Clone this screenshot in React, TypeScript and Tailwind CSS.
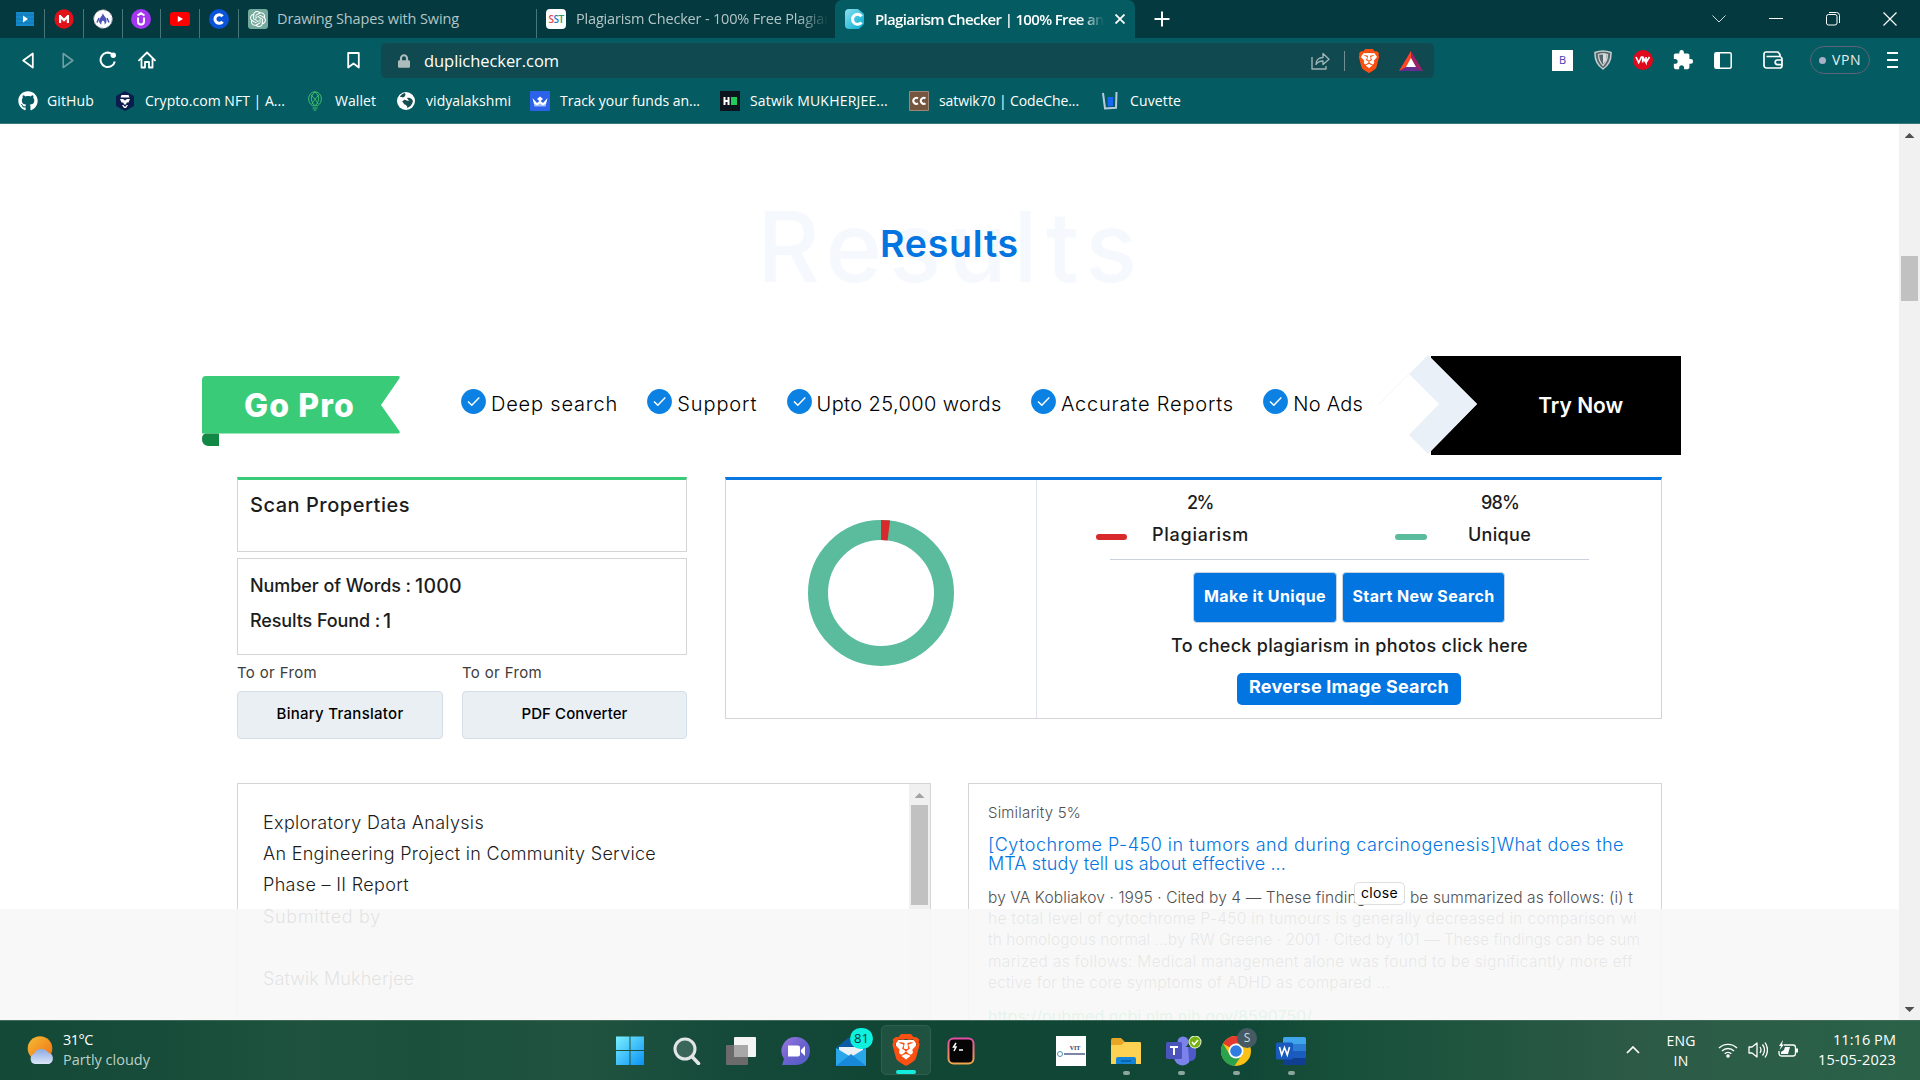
import { useLayoutEffect, useRef, useState } from "react";
import type { ReactNode } from "react";
import { FaGithub, FaLock } from "react-icons/fa";
import { MdExtension } from "react-icons/md";
import { SiBrave, SiOpenai } from "react-icons/si";

/** Single line of text whose tracking is adjusted so the line fills `w` pixels. */
function T({ w, className = "", children }: { w: number; className?: string; children: string }) {
  const ref = useRef<HTMLSpanElement>(null);
  const [spacing, setSpacing] = useState<number | null>(null);
  useLayoutEffect(() => {
    if (!ref.current || spacing !== null) return;
    const natural = ref.current.getBoundingClientRect().width;
    setSpacing((w - natural) / children.length);
  }, [w, children, spacing]);
  return (
    <span
      ref={ref}
      className={`block w-fit shrink-0 whitespace-pre ${className}`}
      style={spacing === null ? undefined : { letterSpacing: `${spacing}px` }}
    >
      {children}
    </span>
  );
}

function Brave({ className = "" }: { className?: string }) {
  return (
    <span className={`relative flex shrink-0 items-center justify-center ${className}`}>
      <span className="absolute inset-[18%] rounded-b-full bg-white" />
      <SiBrave className="relative size-full text-[#fb5011]" />
    </span>
  );
}

function Pinned({ first, children }: { first?: boolean; children: ReactNode }) {
  return (
    <div
      className={`mt-[9px] flex h-[29px] items-start justify-center border-r border-[#47777a] ${
        first ? "w-[45px] pl-[5px]" : "w-[38.8px]"
      }`}
    >
      {children}
    </div>
  );
}

function TabBar() {
  return (
    <div className="flex h-[38px] bg-[#03393f] text-[#b4c5c6]">
      <Pinned first>
        <svg viewBox="0 0 18 14" className="mt-[3px] h-[14px] w-[18px]">
          <path d="M0 0h18v14H0z" fill="#1689ca" />
          <path d="M0 3h18M0 7h18M0 11h18" stroke="#0c74b4" />
          <path d="M7 3.500l5 3.500-5 3.500z" fill="#fff" />
        </svg>
      </Pinned>
      <Pinned>
        <svg viewBox="0 0 20 20" className="size-5">
          <circle cx="10" cy="10" r="9.700" fill="#e01119" />
          <path d="M5 14V6h1.600L10 9.500 13.400 6H15v8h-2.200v-4L10 12.700 7.200 10v4z" fill="#fff" />
        </svg>
      </Pinned>
      <Pinned>
        <svg viewBox="0 0 20 20" className="size-5">
          <circle cx="10" cy="10" r="9.300" fill="#fff" stroke="#8a8f98" strokeDasharray="5 2" />
          <path d="M10 4c0 2.500 4 4.500 3.500 8 0 2-1 3-2 3.500.5-1.500 0-3-1.500-4-1.500 1-2 2.500-1.500 4-1.500-.5-2.500-2-2.500-4C6.500 8.500 9.500 7 10 4z" fill="#4b52b8" />
          <path d="M4 13.500l2-4.500M16 13.500l-2-4.500" fill="none" stroke="#4b52b8" strokeWidth="1.500" />
        </svg>
      </Pinned>
      <Pinned>
        <svg viewBox="0 0 20 20" className="size-5">
          <circle cx="10" cy="10" r="10" fill="#a435f0" />
          <path d="M6.500 6.500L10 4.300l3.500 2.200M7 8.500v4a3 3 0 006 0v-4" fill="none" stroke="#fff" strokeWidth="2" />
        </svg>
      </Pinned>
      <Pinned>
        <svg viewBox="0 0 20 14" className="mt-[3px] h-[14px] w-5">
          <rect width="20" height="14" rx="3" fill="#f00" />
          <path d="M7.800 4l5.200 3-5.200 3z" fill="#fff" />
        </svg>
      </Pinned>
      <Pinned>
        <svg viewBox="0 0 20 20" className="size-5">
          <circle cx="10" cy="10" r="10" fill="#0b53d8" />
          <path d="M13.600 7.300a4.300 4.300 0 100 5.400" fill="none" stroke="#fff" strokeWidth="3" />
        </svg>
      </Pinned>
      <div className="mt-[9px] flex h-[29px] w-[298px] border-r border-[#47777a] pl-[9px]">
        <span className="flex size-5 items-center justify-center rounded-[3px] bg-[#74aa9c] text-white">
          <SiOpenai className="size-[16px]" />
        </span>
        <T w={182} className="ml-[9px] text-[14.500px] leading-[20px]">Drawing Shapes with Swing</T>
      </div>
      <div className="flex h-[38px] w-[298px] overflow-hidden pl-[9px] pt-[9px]">
        <span className="flex h-5 w-5 shrink-0 items-center justify-center rounded-[4px] bg-white text-[10px] font-semibold tracking-tighter">
          <i className="not-italic text-[#e04a4a]">S</i>
          <i className="not-italic text-[#2678c8]">S</i>
          <i className="not-italic text-[#2b9a5d]">T</i>
        </span>
        <div className="ml-[10px] w-[253px] overflow-hidden [mask-image:linear-gradient(90deg,#000_88%,transparent)]">
          <T w={254} className="text-[14.500px] leading-[20px]">Plagiarism Checker - 100% Free Plagiar</T>
        </div>
      </div>
      <div className="flex w-[300px] rounded-t-[7px] bg-[#045c62] pl-[10px] pt-[9px] text-white">
        <svg viewBox="0 0 20 20" className="size-5">
          <defs>
            <linearGradient id="dc" x2="1" y2="1">
              <stop stopColor="#8be0ee" />
              <stop offset="1" stopColor="#00abd0" />
            </linearGradient>
          </defs>
          <path d="M4 0h9l6 5v10l-5 5H4a4 4 0 01-4-4V4a4 4 0 014-4z" fill="url(#dc)" />
          <path d="M16.500 7.300a5 5 0 100 6" fill="none" stroke="#fff" strokeWidth="3" />
        </svg>
        <div className="ml-[10px] w-[229px] overflow-hidden [mask-image:linear-gradient(90deg,#000_90%,transparent)]">
          <T w={229} className="text-[15px] font-semibold leading-[20px]">Plagiarism Checker | 100% Free an</T>
        </div>
        <svg viewBox="0 0 10 10" className="ml-[11px] mt-[5px] size-[10px]">
          <path d="M.5.5l9 9m0-9l-9 9" stroke="#fff" strokeWidth="1.800" />
        </svg>
      </div>
      <svg viewBox="0 0 16 16" className="ml-[19px] mt-[11px] size-4">
        <path d="M8 .5v15M.5 8h15" stroke="#fff" strokeWidth="2" />
      </svg>
      <svg viewBox="0 0 14 8" className="ml-[542px] mt-[15px] h-2 w-[14px]">
        <path d="M.5.5L7 7l6.500-6.500" fill="none" stroke="#cfdcdc" />
      </svg>
      <svg viewBox="0 0 14 2" className="ml-[43px] mt-[18px] h-[2px] w-[14px]">
        <path d="M0 .5h14" stroke="#fff" />
      </svg>
      <svg viewBox="0 0 14 14" className="ml-[43px] mt-[12px] size-[14px]">
        <rect x=".5" y="2.500" width="10.500" height="10.500" rx="2" fill="none" stroke="#fff" />
        <path d="M3 .5h7.500a3 3 0 013 3V11" fill="none" stroke="#fff" />
      </svg>
      <svg viewBox="0 0 14 14" className="ml-[43px] mt-[12px] size-[14px]">
        <path d="M.5.5l13 13m0-13l-13 13" stroke="#fff" strokeWidth="1.200" />
      </svg>
    </div>
  );
}

function Toolbar() {
  return (
    <div className="flex h-[44px] items-center">
      <svg viewBox="0 0 12 17" className="ml-[22px] h-[17px] w-3">
        <path d="M10.800 1.500v14L1.200 8.500z" fill="none" stroke="#fff" strokeWidth="1.800" strokeLinejoin="round" />
      </svg>
      <svg viewBox="0 0 12 17" className="ml-[28px] h-[17px] w-3">
        <path d="M1.200 1.500v14l9.600-7z" fill="none" stroke="#6e9fa2" strokeWidth="1.600" strokeLinejoin="round" />
      </svg>
      <svg viewBox="0 0 18 18" className="ml-[25px] size-[18px]">
        <path d="M15.800 10.500A7.200 7.200 0 1113 3" fill="none" stroke="#fff" strokeWidth="2" />
        <circle cx="14.300" cy="4.200" r="2.700" fill="#fff" />
      </svg>
      <svg viewBox="0 0 18 18" className="ml-[21px] size-[18px]">
        <path d="M1 9.300L9 1.500l8 7.800M3.500 8v8.500H7V11h4v5.500h3.500V8" fill="none" stroke="#fff" strokeWidth="1.800" strokeLinejoin="round" strokeLinecap="round" />
      </svg>
      <svg viewBox="0 0 13 17" className="ml-[191px] h-[17px] w-[13px]">
        <path d="M1.200 1h10.600v14.500L6.500 11.500l-5.300 4z" fill="none" stroke="#fff" strokeWidth="1.800" strokeLinejoin="round" />
      </svg>
      <div className="ml-[21px] mt-[1px] flex h-[35px] w-[1053px] items-center rounded-[5px] bg-[#10494f]">
        <FaLock className="ml-[17px] h-[14px] w-[12px] text-[#aebbbd]" />
        <T w={135} className="ml-[14px] text-[16.500px] leading-[24px] text-white">duplichecker.com</T>
        <svg viewBox="0 0 19 18" className="ml-[752px] h-[18px] w-[19px]">
          <path d="M1 5v12h14v-3M5 12.500c0-4.500 3-7 7-7V1.500L18 7.300l-6 5.200V9c-3 0-5.500 1-7 3.500z" fill="none" stroke="#9fb3b5" strokeWidth="1.400" strokeLinejoin="round" />
        </svg>
        <span className="ml-[14px] h-5 w-px bg-[#6f8f92]" />
        <Brave className="ml-[12px] size-[24px]" />
        <svg viewBox="0 0 24 20" className="ml-[18px] h-[20px] w-6">
          <path d="M12 0l12 20H0z" fill="#9e1f63" />
          <path d="M12 0L0 20l12-7z" fill="#ff4724" />
          <path d="M0 20l12-6 12 6z" fill="#662d91" />
          <path d="M12 7l5 9H7z" fill="#fff" />
        </svg>
      </div>
      <span className="ml-[118px] flex h-[21px] w-[21px] items-center justify-center bg-white text-[11px] text-[#3e38b8]">B</span>
      <svg viewBox="0 0 18 20" className="ml-[21px] h-5 w-[18px]">
        <path d="M1 2.500Q9-.5 17 2.500 17.500 13 9 19 .5 13 1 2.500z" fill="#54676b" stroke="#c8cdd0" strokeWidth="1.500" />
        <path d="M4.500 4.500Q9 3 13.500 4.500 13.500 11 9 15.500 4.500 11 4.500 4.500z" fill="none" stroke="#c8cdd0" strokeWidth="1.300" />
        <path d="M9 4h3.500v6L9 14z" fill="#d8dcde" />
      </svg>
      <svg viewBox="0 0 20 20" className="ml-[21px] size-5">
        <circle cx="10" cy="10" r="10" fill="#e0081d" />
        <path d="M3 7l2.700 5.500L8.400 7h1.300v5.500M9.700 7l3.300 5.500V7M13 12.500L16.500 7" fill="none" stroke="#fff" strokeWidth="1.700" />
      </svg>
      <MdExtension className="ml-[19px] size-[22px] text-white" />
      <svg viewBox="0 0 18 17" className="ml-[20px] h-[17px] w-[18px]">
        <rect x=".8" y=".8" width="16.400" height="15.400" rx="1.500" fill="none" stroke="#fff" strokeWidth="1.500" />
        <path d="M1 1h5v15H1z" fill="#fff" />
      </svg>
      <svg viewBox="0 0 20 18" className="ml-[31px] h-[18px] w-5">
        <path d="M17 5.500V3.500L15 1H3a2 2 0 00-2 2v11.500a2.500 2.500 0 002.500 2.500h13a2.500 2.500 0 002.500-2.500V8a2.500 2.500 0 00-2.500-2.500H3.500M19 9h-4.500a2.300 2.300 0 000 4.600H19" fill="none" stroke="#fff" strokeWidth="1.700" />
      </svg>
      <div className="ml-[27px] flex h-[28px] w-[60px] items-center rounded-full border border-[#5d6276] pl-[8px]">
        <span className="size-[7px] rounded-full bg-[#a9b0c5]" />
        <T w={29} className="ml-[6px] text-[14px] leading-5 text-[#e6eeee]">VPN</T>
      </div>
      <svg viewBox="0 0 11 18" className="ml-[17px] h-[18px] w-[11px]">
        <path d="M0 2h11M0 9h11M0 16h11" stroke="#fff" strokeWidth="2" />
      </svg>
    </div>
  );
}

function Bookmarks() {
  const label = "text-[14px] leading-[20px] text-white";
  return (
    <div className="flex h-[42px] items-center border-b border-[#37777d] pb-[3px]">
      <FaGithub className="ml-[18px] size-5 text-white" />
      <T w={47} className={`ml-[9px] ${label}`}>GitHub</T>
      <svg viewBox="0 0 18 20" className="ml-[22px] h-5 w-[18px]">
        <path d="M9 0l9 5v10l-9 5-9-5V5z" fill="#0b1c4d" />
        <path d="M5.500 4h7l1 2.500h-9zM4 8h3l2 1.500L11 8h3l-1.500 3.500h-1.800L10 13.500H8l-.700-2H5.500zM6 14h1.500l1 1.500h1l1-1.500H12l-2 3H8z" fill="#fff" />
      </svg>
      <T w={140} className={`ml-[11px] ${label}`}>Crypto.com NFT | A...</T>
      <svg viewBox="0 0 14 20" className="ml-[23px] h-5 w-[14px]">
        <path d="M7 .7c8 1 8 11 2.500 14h-5C-1 11.700-1 1.700 7 .7zM7 1c5 4 4.500 9 .5 13.500M7 1c-5 4-4.500 9-.5 13.500M3 4c3 3 6 6 7 9M11 4c-3 3-6 6-7 9M4.500 17h5M5.500 19h3" fill="none" stroke="#3fc06b" strokeWidth="1" />
      </svg>
      <T w={41} className={`ml-[13px] ${label}`}>Wallet</T>
      <svg viewBox="0 0 18 18" className="ml-[21px] size-[18px]">
        <circle cx="9" cy="9" r="9" fill="#fff" />
        <path d="M3 5c2 0 3 1 4 0s2-2 1-4C5 2 3.500 3 3 5zM10 6c3-1 5 1 6 3-1 4-3 6-6 7 1-2-1-3-3-4-1-2-2-3-3-3 1 1 2 0 3-1s3 1 5 1z" fill="#174e53" />
      </svg>
      <T w={85} className={`ml-[11px] ${label}`}>vidyalakshmi</T>
      <svg viewBox="0 0 20 20" className="ml-[19px] size-5">
        <rect width="20" height="20" rx="1" fill="#2c62ea" />
        <path d="M2.500 7l4.500 5 3-2.500 3 2.500 4.500-5-2 8h-11z" fill="#fff" />
        <path d="M7 8l3-2.500L13 8l-3 2.500z" fill="#fff" />
        <path d="M4 12.500l3 2 3-2 3 2 3-2-.5 3h-11z" fill="#9bb9ff" />
      </svg>
      <T w={140} className={`ml-[10px] ${label}`}>Track your funds an...</T>
      <svg viewBox="0 0 20 20" className="ml-[20px] size-5">
        <path d="M0 0h20v20H0z" fill="#0e141e" />
        <path d="M4.500 6v8M8.500 6v8M4.500 10h4" stroke="#fff" strokeWidth="2" />
        <path d="M11 6h6v8h-6z" fill="#1ecb5b" />
      </svg>
      <T w={138} className={`ml-[10px] ${label}`}>Satwik MUKHERJEE...</T>
      <svg viewBox="0 0 20 20" className="ml-[21px] size-5">
        <path d="M.5.500h19v19H.5z" fill="#77563f" stroke="#9c8778" />
        <path d="M9 7.300a3 3 0 100 5M16.500 7.300a3 3 0 100 5" fill="none" stroke="#fff" strokeWidth="2" />
      </svg>
      <T w={140} className={`ml-[10px] ${label}`}>satwik70 | CodeChe...</T>
      <svg viewBox="0 0 16 20" className="ml-[23px] h-5 w-4">
        <path d="M1 2l2 15.500 11-.8L14.500 1" fill="none" stroke="#b7cbdc" strokeWidth="2" />
        <path d="M5.500 6H11v9l-5 .5z" fill="#1767f5" />
      </svg>
      <T w={51} className={`ml-[12px] ${label}`}>Cuvette</T>
    </div>
  );
}

const features: [string, number][] = [
  ["Deep search", 126],
  ["Support", 79],
  ["Upto 25,000 words", 184],
  ["Accurate Reports", 172],
  ["No Ads", 69],
];

function Promo() {
  return (
    <div className="flex h-[99px] items-start">
      <div className="relative ml-[202px] mt-[19px] h-[71px] w-[198px]">
        <svg viewBox="0 0 198 71" className="size-full">
          <path d="M4 1h192q3 0 1 3L179 30l18 25.500q2 3-1 3H0V5q0-4 4-4z" fill="#3acb79" />
          <path d="M5 58.500h12V71H6q-6-1-6-7t5-5.500z" fill="#118945" />
        </svg>
        <T w={111} className="absolute left-[42px] top-[11px] text-[32px] font-extrabold leading-[40px] text-white">Go Pro</T>
      </div>
      <div className="ml-[61px] mt-[33px] flex gap-[29.300px]">
        {features.map(([name, w]) => (
          <div key={name} className="flex gap-[5px]">
            <svg viewBox="0 0 25 25" className="size-[25px]">
              <circle cx="12.500" cy="12.500" r="12.400" fill="#0c81e4" />
              <path d="M7 12.500l3.800 3.800 7.500-7.800" fill="none" stroke="#fff" strokeWidth="1.500" />
            </svg>
            <T w={w + 1} className="pt-[3px] text-[20px] font-[350] leading-[24px] text-black">{name}</T>
          </div>
        ))}
      </div>
      <div className="relative ml-[68px] h-[99px] w-[250px] bg-black">
        <svg viewBox="0 0 98 99" className="absolute -left-[52px] -top-[1px] h-[99px] w-[98px]">
          <path d="M0 49l30-30" stroke="#f4f4f4" />
          <path d="M49 0l49 49-49 50L11 61z" fill="#fff" />
          <path d="M49 0l49 49-49 50-19-19 30-31-30-30z" fill="#eaf0f8" />
        </svg>
        <T w={85} className="ml-[107px] mt-[37px] text-[21px] font-semibold leading-[26px] text-white">Try Now</T>
      </div>
    </div>
  );
}

function ScanColumn() {
  const heading = "font-medium leading-[24px] text-[#1c1c1c]";
  return (
    <div className="w-[450px]">
      <div className="h-[75px] border border-t-[3px] border-[#d5d5d5] border-t-[#3acb79] pl-[12px] pt-[13px]">
        <T w={160} className={`text-[20px] ${heading}`}>Scan Properties</T>
      </div>
      <div className="mt-[6px] h-[97px] border border-[#d5d5d5] pl-[12px] pt-[15px]">
        <div className="flex">
          <T w={161} className={`text-[18px] ${heading}`}>Number of Words :</T>
          <T w={47} className={`ml-[4px] text-[19.500px] ${heading}`}>1000</T>
        </div>
        <div className="mt-[11px] flex">
          <T w={130} className={`text-[18px] ${heading}`}>Results Found :</T>
          <T w={7} className={`ml-[3px] text-[19.500px] ${heading}`}>1</T>
        </div>
      </div>
      <div className="mt-[8px] grid grid-cols-[206px_225px] gap-x-[19px] gap-y-[8px]">
        <T w={80} className="text-[15px] leading-[20px] text-[#3c3c3c]">To or From</T>
        <T w={80} className="text-[15px] leading-[20px] text-[#3c3c3c]">To or From</T>
        <div className="flex h-[48px] items-center justify-center rounded-[4px] border border-[#d3dee8] bg-[#eaeff4] pb-[1px]">
          <T w={127} className="text-[15px] font-medium text-black">Binary Translator</T>
        </div>
        <div className="flex h-[48px] items-center justify-center rounded-[4px] border border-[#d3dee8] bg-[#eaeff4] pb-[1px]">
          <T w={106} className="text-[15px] font-medium text-black">PDF Converter</T>
        </div>
      </div>
    </div>
  );
}

function ScorePanel() {
  const text = "text-[18px] font-medium text-[#1c1c1c]";
  return (
    <div className="ml-[38px] flex h-[242px] w-[937px] border border-t-[3px] border-[#d5d5d5] border-t-[#0a76e0]">
      <div className="flex w-[311px] justify-center border-r border-[#dfe3f0] pt-[40px]">
        <svg viewBox="0 0 146 146" className="size-[146px]">
          <circle cx="73" cy="73" r="63" fill="none" stroke="#5abb9d" strokeWidth="20" />
          <circle cx="73" cy="73" r="63" fill="none" stroke="#d82a2c" strokeWidth="20" pathLength="100" strokeDasharray="2 98" transform="rotate(-90 73 73)" />
        </svg>
      </div>
      <div className="pt-[7px]">
        <div className="ml-[59px] flex">
          <div className="w-[299px]">
            <T w={26} className={`ml-[91px] leading-[32px] ${text}`}>2%</T>
            <div className="flex">
              <span className="mt-[15px] h-[6px] w-[31px] rounded-full bg-[#d82a2c]" />
              <T w={97} className={`ml-[25px] leading-[32px] ${text}`}>Plagiarism</T>
            </div>
          </div>
          <div>
            <T w={38} className={`ml-[86px] leading-[32px] ${text}`}>98%</T>
            <div className="flex">
              <span className="mt-[15px] h-[6px] w-[32px] rounded-full bg-[#5abb9d]" />
              <T w={63} className={`ml-[41px] leading-[32px] ${text}`}>Unique</T>
            </div>
          </div>
        </div>
        <div className="ml-[73px] mt-[8px] h-px w-[479px] bg-[#c9d1dc]" />
        <div className="ml-[156px] mt-[12px] flex gap-[5px]">
          <div className="flex h-[51px] w-[144px] items-center justify-center rounded-[4px] border border-[#c7d3df] bg-[#0275e0] pb-[3px]">
            <T w={122} className="text-[16px] font-bold text-white">Make it Unique</T>
          </div>
          <div className="flex h-[51px] w-[163px] items-center justify-center rounded-[4px] border border-[#c7d3df] bg-[#0275e0] pb-[3px]">
            <T w={142} className="text-[16px] font-bold text-white">Start New Search</T>
          </div>
        </div>
        <T w={357} className={`ml-[134px] mt-[11px] leading-[24px] ${text}`}>To check plagiarism in photos click here</T>
        <div className="ml-[200px] mt-[15px] flex h-[32px] w-[224px] justify-center rounded-[5px] bg-[#0275e0]">
          <T w={200} className="text-[18px] font-bold leading-[27px] text-white">Reverse Image Search</T>
        </div>
      </div>
    </div>
  );
}

function Documents() {
  const body = "text-[18px] font-[320] leading-[31px] text-[#1c1c1c]";
  const desc = "text-[15.500px] font-[350] leading-[21.400px] text-[#505050]";
  const link = "text-[18px] font-[350] leading-[19px] text-[#0275e0]";
  return (
    <div className="ml-[237px] mt-[64px] flex h-[237px]">
      <div className="flex w-[694px] justify-between border border-b-0 border-[#d5d5d5]">
        <div className="ml-[25px] mt-[23px]">
          <T w={221} className={body}>Exploratory Data Analysis</T>
          <T w={393} className={body}>An Engineering Project in Community Service</T>
          <T w={146} className={body}>Phase – II Report</T>
          <T w={118} className={`mt-[1px] ${body}`}>Submitted by</T>
          <T w={151} className={`mt-[31px] ${body}`}>Satwik Mukherjee</T>
        </div>
        <div className="flex w-[21px] flex-col items-center bg-[#f0f0f0]">
          <span className="mt-[9px] h-[5px] w-[10px] bg-[#a3a3a3] [clip-path:polygon(50%_0,100%_100%,0_100%)]" />
          <span className="mt-[7px] h-[100px] w-[17px] bg-[#c1c1c1]" />
        </div>
      </div>
      <div className="ml-[37px] w-[694px] overflow-hidden border border-b-0 border-[#d5d5d5] pl-[19px] pt-[18px]">
        <T w={93} className="text-[15px] font-[350] leading-[22px] text-[#505050]">Similarity 5%</T>
        <T w={636} className={`mt-[11px] ${link}`}>[Cytochrome P-450 in tumors and during carcinogenesis]What does the</T>
        <T w={298} className={link}>MTA study tell us about effective ...</T>
        <T w={645} className={`mt-[13.500px] ${desc}`}>by VA Kobliakov · 1995 · Cited by 4 — These findings can be summarized as follows: (i) t</T>
        <T w={649} className={desc}>he total level of cytochrome P-450 in tumours is generally decreased in comparison wi</T>
        <T w={652} className={desc}>th homologous normal ...by RW Greene · 2001 · Cited by 101 — These findings can be sum</T>
        <T w={645} className={desc}>marized as follows: Medical management alone was found to be significantly more eff</T>
        <T w={402} className={desc}>ective for the core symptoms of ADHD as compared ...</T>
        <T w={324} className="mt-[12px] text-[16px] leading-[21px] text-[#3acb79]">https://pubmed.ncbi.nlm.nih.gov/8590750/</T>
      </div>
    </div>
  );
}

function Page() {
  return (
    <div className="relative flex h-[896px] overflow-hidden bg-white font-['Inter',sans-serif]">
      <main className="w-[1899px]">
        <div className="grid h-[232px] items-start">
          <T w={387} className="ml-[757px] mt-[73px] text-[97px] font-medium leading-[100px] text-[#f5f9fe] [grid-area:1/1]">Results</T>
          <T w={139} className="ml-[880px] mt-[100px] text-[37.500px] font-semibold leading-[40px] text-[#0275e0] [grid-area:1/1]">Results</T>
        </div>
        <Promo />
        <div className="ml-[237px] mt-[22px] flex h-[242px]">
          <ScanColumn />
          <ScorePanel />
        </div>
        <Documents />
      </main>
      <div className="flex w-[21px] flex-col items-center bg-[#f1f1f1]">
        <span className="mt-[9px] h-[5px] w-[10px] bg-[#505050] [clip-path:polygon(50%_0,100%_100%,0_100%)]" />
        <span className="mt-[118px] h-[45px] w-[17px] bg-[#c1c1c1]" />
        <span className="mt-auto mb-[8px] h-[5px] w-[10px] bg-[#505050] [clip-path:polygon(0_0,100%_0,50%_100%)]" />
      </div>
      <div className="absolute left-0 top-[785px] h-[111px] w-[1899px] bg-[#f7f7f7]/90" />
      <div className="absolute left-[1354px] top-[758px] flex h-[23px] w-[51px] items-center justify-center rounded-[5px] border border-[#dedede] bg-white pb-[2px]">
        <T w={37} className="text-[14px] leading-[18px] text-black">close</T>
      </div>
    </div>
  );
}

function TaskApp({ running, className, children }: { running?: boolean; className: string; children: ReactNode }) {
  return (
    <div className={`relative flex h-[60px] w-[30px] shrink-0 items-center justify-center ${className}`}>
      {children}
      {running && <span className="absolute bottom-[6px] h-[4px] w-[7px] rounded-full bg-[#8ba79b]" />}
    </div>
  );
}

function Taskbar() {
  return (
    <footer className="flex h-[60px] border-t border-[#406a5a] bg-[linear-gradient(90deg,#134936_0%,#164c39_8%,#1f5340_16%,#1a503c_22%,#215440_30%,#15493a_38%,#114635_46%,#114736_65%,#17503a_70%,#2c5a46_85%,#2a6248_100%)] text-white">
      <svg viewBox="0 0 28 29" className="ml-[27px] mt-[15px] h-[29px] w-7">
        <defs>
          <linearGradient id="sun" x2="1" y2="1">
            <stop stopColor="#f4bd35" />
            <stop offset="1" stopColor="#f26d13" />
          </linearGradient>
          <linearGradient id="cloud" x2="0" y2="1">
            <stop stopColor="#8eaae2" />
            <stop offset="1" stopColor="#dbe6f8" />
          </linearGradient>
        </defs>
        <circle cx="13" cy="12.500" r="12.300" fill="url(#sun)" />
        <path d="M8 28a5.200 5.200 0 01-1-10 8 8 0 0114-1.500A6 6 0 0122 28z" fill="url(#cloud)" />
      </svg>
      <div className="ml-[8px] w-[88px] pt-[9px]">
        <T w={30} className="text-[14.500px] leading-[20px]">31°C</T>
        <T w={87} className="text-[14.500px] leading-[20px] text-[#bdd0c8]">Partly cloudy</T>
      </div>
      <TaskApp className="ml-[464px]">
        <svg viewBox="0 0 30 30" className="size-[30px]">
          <defs>
            <linearGradient id="win" x2="1" y2="1">
              <stop stopColor="#7af0ff" />
              <stop offset="1" stopColor="#0a91f5" />
            </linearGradient>
          </defs>
          <path d="M1 .5h13.500V14H1zM15.500.5H29V14H15.500zM1 15h13.500v14H1zM15.500 15H29v14H15.500z" fill="url(#win)" />
        </svg>
      </TaskApp>
      <TaskApp className="ml-[27px]">
        <svg viewBox="0 0 28 28" className="size-7">
          <circle cx="12" cy="12" r="10" fill="#fff" fillOpacity=".15" stroke="#e3e6e6" strokeWidth="3" />
          <path d="M19 19.500l6.500 7" stroke="#e3e6e6" strokeWidth="3.500" strokeLinecap="round" />
        </svg>
      </TaskApp>
      <TaskApp className="ml-[24px]">
        <svg viewBox="0 0 30 28" className="h-7 w-[30px]">
          <rect x="8" width="22" height="20" rx="1" fill="#f4f4f4" />
          <rect y="8" width="22" height="20" rx="1" fill="#6b6b6b" />
          <path d="M8 8h14v12H8z" fill="#a8a8a8" />
        </svg>
      </TaskApp>
      <TaskApp className="ml-[25px]">
        <svg viewBox="0 0 30 28" className="h-7 w-[30px]">
          <defs>
            <linearGradient id="chat" x2="1" y2="1">
              <stop stopColor="#9b78e0" />
              <stop offset=".5" stopColor="#6b62cf" />
              <stop offset="1" stopColor="#4f5bc4" />
            </linearGradient>
          </defs>
          <path d="M15 0a14 14 0 110 28H1l2-6A14 14 0 0115 0z" fill="url(#chat)" />
          <path d="M7 8.500h10q2 0 2 2v7q0 2-2 2H7zM20 13l4-4v10l-4-4z" fill="#fff" />
        </svg>
      </TaskApp>
      <TaskApp className="ml-[25px]">
        <svg viewBox="0 0 30 28" className="mt-[1px] h-[28px] w-[30px]">
          <path d="M0 10L12 0h6l12 10v18H0z" fill="#0b5aa6" />
          <path d="M3 9h24v10H3z" fill="#e9f1f7" />
          <path d="M0 10l15 9 15-9v18H0z" fill="#2aa6ea" />
          <path d="M0 28l15-12 15 12z" fill="#1888d8" />
        </svg>
        <span className="absolute -right-[7px] top-[7px] flex h-[21px] w-[23px] items-center justify-center rounded-full bg-[#10f0df] text-[13px] text-[#063b36]">81</span>
      </TaskApp>
      <div className="relative ml-[15px] mt-[4px] flex h-[50px] w-[50px] justify-center rounded-[5px] border border-[#2f5f4f] bg-[#205242] pt-[8px]">
        <Brave className="size-[32px]" />
        <span className="absolute bottom-0 h-[4px] w-[20px] rounded-full bg-[#13ebdd]" />
      </div>
      <TaskApp className="ml-[15px]">
        <svg viewBox="0 0 28 28" className="size-7">
          <defs>
            <linearGradient id="term" x2="0" y2="1">
              <stop stopColor="#e24fa6" />
              <stop offset="1" stopColor="#f0a64a" />
            </linearGradient>
          </defs>
          <rect x="1.500" y="1.500" width="25" height="25" rx="5" fill="#050505" stroke="url(#term)" strokeWidth="2" />
          <path d="M9 6l-2.500 4H9l-2 4M12 13h4" fill="none" stroke="#fff" strokeWidth="1.500" />
        </svg>
      </TaskApp>
      <TaskApp className="ml-[80px]">
        <div className="flex h-[30px] w-[30px] flex-col items-center justify-center bg-white font-['Liberation_Serif',serif] text-[6px] font-bold leading-[6px] text-[#2b3a72]">
          <span className="pl-[8px]">VIT</span>
          <span className="flex w-[28px] items-center gap-px">
            <i className="size-[6px] rounded-full border border-[#4c93b6]" />
            <i className="h-[2px] flex-1 bg-[#7d86a8]" />
          </span>
        </div>
      </TaskApp>
      <TaskApp running className="ml-[25px]">
        <svg viewBox="0 0 30 27" className="h-[27px] w-[30px]">
          <path d="M0 2q0-2 2-2h8l4 4h14q2 0 2 2v20H0z" fill="#e9a526" />
          <path d="M0 8q0-1 1-1h9l4-3h15l1 1v20q0 1-1 1H1q-1 0-1-1z" fill="#fdd152" />
          <path d="M5 26v-5q0-2 2-2h16q2 0 2 2v5z" fill="#1283d6" />
          <path d="M10 23h10" stroke="#0a5da5" strokeWidth="1.600" />
        </svg>
      </TaskApp>
      <TaskApp running className="ml-[25px]">
        <svg viewBox="0 0 36 30" className="ml-[5px] h-[30px] w-9 shrink-0">
          <circle cx="17" cy="6" r="5.500" fill="#7b83eb" />
          <path d="M8 11h17v10a8.500 8.500 0 01-17 0z" fill="#7b83eb" />
          <path d="M22 11h8v8a6 6 0 01-7 6z" fill="#5059c9" />
          <rect y="6" width="16" height="17" rx="1.500" fill="#4b53bc" />
          <path d="M4 11h8M8 11v8" stroke="#fff" strokeWidth="2" />
          <circle cx="29" cy="6" r="6.500" fill="#e9f3d8" />
          <circle cx="29" cy="6" r="5.500" fill="#76b012" />
          <path d="M26 6l2 2.500 4-4.500" fill="none" stroke="#fff" strokeWidth="1.500" />
        </svg>
      </TaskApp>
      <TaskApp running className="ml-[25px]">
        <svg viewBox="0 0 30 30" className="size-[30px]">
          <circle cx="15" cy="15" r="15" fill="#fbc116" />
          <path d="M15 15L2 7.500A15 15 0 0128 7.500H15z" fill="#e33b2e" />
          <path d="M2 7.500A15 15 0 0013.500 30L21 18.500 9 19z" fill="#2ba24c" />
          <circle cx="15" cy="15" r="7.500" fill="#fff" />
          <circle cx="15" cy="15" r="5.800" fill="#2f7de1" />
        </svg>
        <span className="absolute -right-[6px] top-[7px] flex h-[20px] w-[20px] items-center justify-center rounded-full bg-[#465a64] text-[12px] text-[#cfd8dc]">S</span>
      </TaskApp>
      <TaskApp running className="ml-[25px]">
        <svg viewBox="0 0 30 28" className="h-7 w-[30px]">
          <rect x="7" width="23" height="28" rx="2" fill="#1a5dbe" />
          <path d="M7 2q0-2 2-2h19q2 0 2 2v5H7z" fill="#41a5ee" />
          <path d="M7 7h23v7H7z" fill="#2b7cd3" />
          <path d="M7 21h23v5q0 2-2 2H9q-2 0-2-2z" fill="#103f91" />
          <rect y="5.500" width="17" height="17" rx="1.500" fill="#185abd" />
          <path d="M3.500 10l2.200 8 2.800-7.500L11.300 18l2.200-8" fill="none" stroke="#fff" strokeWidth="1.600" />
        </svg>
      </TaskApp>
      <svg viewBox="0 0 14 8" className="ml-[320px] mt-[25px] h-2 w-[14px]">
        <path d="M1 7l6-6 6 6" fill="none" stroke="#fff" strokeWidth="1.700" />
      </svg>
      <div className="ml-[26px] flex w-[30px] flex-col items-center pt-[10px]">
        <T w={29} className="text-[14px] leading-[20px]">ENG</T>
        <T w={15} className="text-[14px] leading-[20px]">IN</T>
      </div>
      <svg viewBox="0 0 20 16" className="ml-[22px] mt-[21px] h-4 w-5">
        <path d="M1 6a13 13 0 0118 0M4 9a8.500 8.500 0 0112 0M6.700 11.800a4.700 4.700 0 016.600 0" fill="none" stroke="#fff" strokeWidth="1.400" />
        <circle cx="10" cy="14" r="1.800" fill="#fff" />
      </svg>
      <svg viewBox="0 0 20 18" className="ml-[10px] mt-[20px] h-[18px] w-5">
        <path d="M1 6h3l5-4v14l-5-4H1zM12 6q2 3 0 6M14.500 3.500q4 5.500 0 11M17 1.500q5 7.500 0 15" fill="none" stroke="#fff" strokeWidth="1.300" strokeLinejoin="round" />
      </svg>
      <svg viewBox="0 0 20 18" className="ml-[10px] mt-[19px] h-[18px] w-5">
        <path d="M6 5h9q2.500 0 2.500 2.500v6q0 2.500-2.500 2.500H4q-3 0-3-3v-2" fill="none" stroke="#fff" strokeWidth="1.300" />
        <path d="M7 7h5l-2 7H3v-2l3-2zM18 8.500h2v4h-2zM5 0L1 6h2L1.500 10 6 4.500H4z" fill="#fff" />
      </svg>
      <div className="flex w-[98px] flex-col items-end pt-[9px]">
        <T w={63} className="text-[14.500px] leading-[20px]">11:16 PM</T>
        <T w={78} className="text-[14.500px] leading-[20px]">15-05-2023</T>
      </div>
    </footer>
  );
}

export default function App() {
  return (
    <div className="h-[1080px] w-[1920px] overflow-hidden bg-[#045c62] font-['Open_Sans','Noto_Sans',sans-serif]">
      <TabBar />
      <Toolbar />
      <Bookmarks />
      <Page />
      <Taskbar />
    </div>
  );
}
